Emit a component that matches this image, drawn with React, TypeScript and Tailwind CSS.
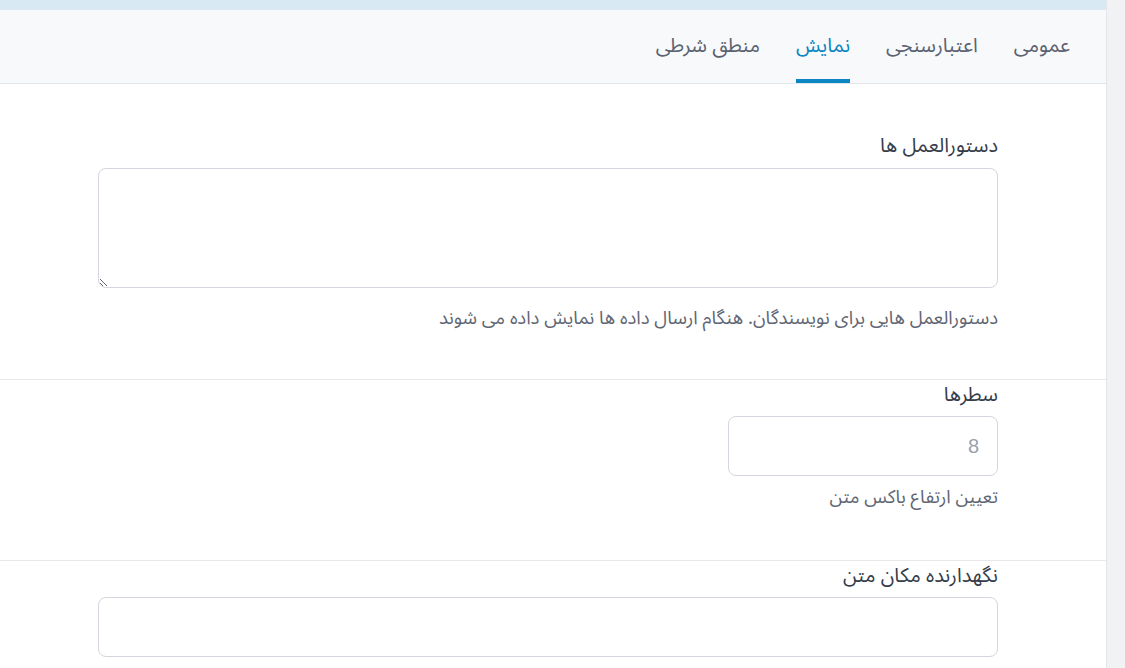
import React from 'react';
import clsx from 'clsx';

const TABS = [
  { key: 'general', label: 'عمومی' },
  { key: 'validation', label: 'اعتبارسنجی' },
  { key: 'display', label: 'نمایش' },
  { key: 'logic', label: 'منطق شرطی' },
];

const FONT = "font-['Noto_Sans_Arabic','Noto_Naskh_Arabic','DejaVu_Sans',sans-serif]";

function Field({
  label,
  help,
  helpGap,
  inputGap = 'mt-[7px]',
  children,
}: {
  label: string;
  help?: string;
  helpGap: string;
  inputGap?: string;
  children: React.ReactNode;
}) {
  return (
    <div className="pl-[98px] pr-[108px]">
      <div className="text-[20px] leading-[30px] text-[#363d4a]">{label}</div>
      <div className={inputGap}>{children}</div>
      {help && <div className={clsx('text-[18.5px] leading-[22px] text-[#5f6673]', helpGap)}>{help}</div>}
    </div>
  );
}

export default function App() {
  const active = 'display';
  return (
    <div dir="rtl" className={clsx('flex h-[668px] w-[1125px] overflow-hidden bg-white', FONT)}>
      {/* right gutter (scrollbar area) */}
      <div className="w-[19px] shrink-0 border-l border-[#e3e5e8] bg-[#f1f2f4]" />
      <div className="flex min-w-0 flex-1 flex-col">
        <div className="h-[10px] shrink-0 bg-[#d8e9f4]" />
        <div className="flex h-[74px] shrink-0 items-stretch border-b border-[#e3e6ea] bg-[#f8f9fb] pr-[18px]">
          {TABS.map((tab) => (
            <button
              key={tab.key}
              className={clsx(
                'mx-[18px] flex items-center border-b-[4px] pt-[2px] text-[20px]',
                tab.key === active
                  ? 'border-[#0b86c2] text-[#0b86c2]'
                  : 'border-transparent text-[#5b6271]'
              )}
            >
              {tab.label}
            </button>
          ))}
        </div>

        <div className="shrink-0 pt-[47px] pb-[49px]">
          <Field
            label="دستورالعمل ها"
            helpGap="mt-[20px]"
            help="دستورالعمل هایی برای نویسندگان. هنگام ارسال داده ها نمایش داده می شوند"
          >
            <textarea className="block h-[120px] w-full resize rounded-[8px] border border-[#d3d6de] bg-white px-3 py-2 outline-none" />
          </Field>
        </div>
        <div className="shrink-0 border-t border-[#e6e8eb] pb-[51px]">
          <Field label="سطرها" inputGap="mt-[6px]" helpGap="mt-[11px]" help="تعیین ارتفاع باکس متن">
            <input
              className="block h-[60px] w-[270px] rounded-[8px] border border-[#d3d6de] bg-white px-[18px] font-['Liberation_Sans',sans-serif] text-[20px] text-[#3b4250] outline-none placeholder:text-[#9aa1ad]"
              placeholder="8"
            />
          </Field>
        </div>
        <div className="shrink-0 border-t border-[#e6e8eb]">
          <Field label="نگهدارنده مکان متن" inputGap="mt-[6px]" helpGap="">
            <input className="block h-[60px] w-full rounded-[8px] border border-[#d3d6de] bg-white px-[18px] outline-none" />
          </Field>
        </div>
      </div>
    </div>
  );
}
